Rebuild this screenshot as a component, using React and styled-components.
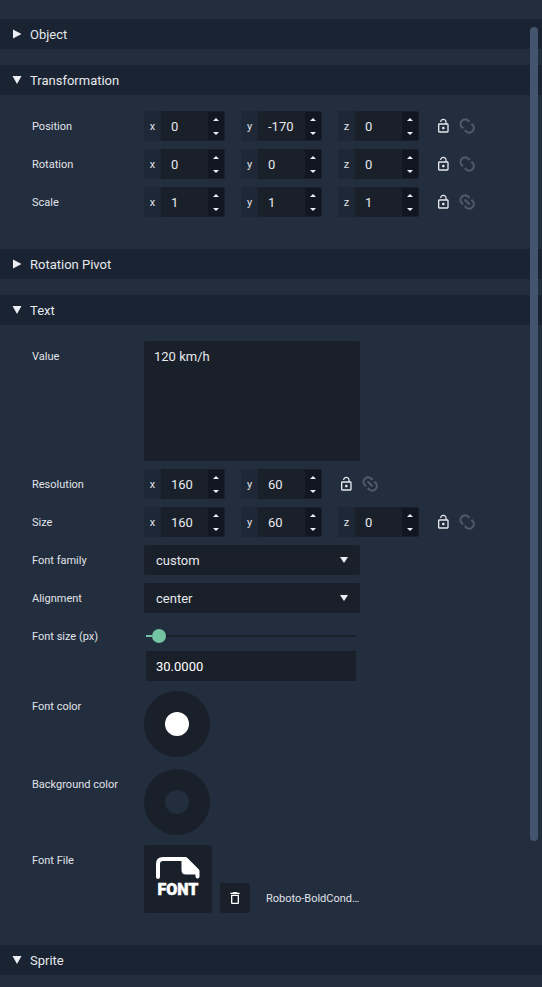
import React, { useState } from 'react';
import styled, { createGlobalStyle, ThemeProvider } from 'styled-components';

const theme = {
  page: '#222d3d',
  header: '#1a2331',
  field: '#1a2029',
  axis: '#1e2735',
  spinner: '#111622',
  text: '#e6e8ee',
  label: '#e0e3ea',
  muted: '#50586a',
  accent: '#74c4a3',
  thumb: '#44546e',
};

const GlobalStyle = createGlobalStyle`
  *, *::before, *::after { box-sizing: border-box; }
  html, body { margin: 0; background: ${theme.page}; }
  body, button, input, select, textarea {
    font-family: Roboto, "Liberation Sans", sans-serif;
    font-size: 13px;
    color: ${theme.text};
  }
  button { padding: 0; border: 0; background: none; cursor: pointer; }
`;

const Panel = styled.main`
  display: flex;
  flex-direction: column;
  gap: 16px;
  min-height: 100vh;
  padding-top: 19px;
`;

const ScrollThumb = styled.div`
  position: fixed;
  top: 27px;
  right: 4px;
  width: 8px;
  height: 82.5vh;
  border-radius: 4px;
  background: ${(p) => p.theme.thumb};
`;

const SectionHeader = styled.button`
  display: flex;
  align-items: center;
  gap: 8px;
  width: 100%;
  height: 30px;
  padding: 0 12px;
  background: ${(p) => p.theme.header};
  text-align: left;
`;

const SectionBody = styled.div`
  display: flex;
  flex-direction: column;
  gap: 8px;
  padding: 16px 32px;
`;

const Row = styled.div`
  display: grid;
  grid-template-columns: 112px minmax(0, 1fr);
  align-items: start;
  padding: ${(p) => (p.$roomy ? '2px 0' : '0')};
`;

const RowLabel = styled.label`
  height: 30px;
  font-size: 11px;
  line-height: 32px;
  color: ${(p) => p.theme.label};
`;

const AxisGroup = styled.div`
  display: flex;
  align-items: center;
  gap: 16px;
`;

const AxisField = styled.div`
  display: flex;
  width: 81px;
  height: 30px;
  border-radius: 2px;
  background: ${(p) => p.theme.field};
  overflow: hidden;
`;

const AxisName = styled.label`
  flex: 0 0 17px;
  background: ${(p) => p.theme.axis};
  font-size: 11px;
  line-height: 32px;
  text-align: center;
  color: ${(p) => p.theme.label};
`;

const AxisInput = styled.input`
  flex: 1;
  min-width: 0;
  padding: 0 0 0 10px;
  border: 0;
  outline: 0;
  background: transparent;
`;

const Spinner = styled.div`
  display: flex;
  flex-direction: column;
  flex: 0 0 16px;
  margin: 1px 1px 1px 0;
  background: ${(p) => p.theme.spinner};
`;

const StepButton = styled.button`
  flex: 1;
  display: flex;
  align-items: center;
  justify-content: center;
`;

const Toggles = styled.div`
  display: flex;
  gap: 6px;
`;

const IconToggle = styled.button`
  display: flex;
  align-items: center;
  justify-content: center;
  width: 18px;
  height: 30px;
  color: ${(p) => (p.$muted ? p.theme.muted : p.theme.text)};
`;

const TextArea = styled.textarea`
  display: block;
  width: 100%;
  max-width: 216px;
  height: 120px;
  padding: 8px 10px;
  border: 0;
  border-radius: 2px;
  outline: 0;
  resize: none;
  line-height: 15px;
  background: ${(p) => p.theme.field};
`;

const SelectBox = styled.div`
  position: relative;
  max-width: 216px;
  height: 30px;
`;

const Select = styled.select`
  appearance: none;
  width: 100%;
  height: 100%;
  padding: 0 32px 0 12px;
  border: 0;
  border-radius: 2px;
  outline: 0;
  background: ${(p) => p.theme.field};
`;

const SelectArrow = styled.span`
  position: absolute;
  inset: 0 12px 0 auto;
  display: flex;
  align-items: center;
  pointer-events: none;
`;

const SliderGroup = styled.div`
  display: flex;
  flex-direction: column;
  max-width: 214px;
  padding: 0 2px;
`;

const Slider = styled.input`
  appearance: none;
  width: 100%;
  height: 30px;
  margin: 0;
  background: transparent;

  &::-webkit-slider-runnable-track {
    height: 2px;
    background: linear-gradient(
      to right,
      ${(p) => p.theme.accent} var(--filled),
      ${(p) => p.theme.field} var(--filled)
    );
  }
  &::-webkit-slider-thumb {
    appearance: none;
    width: 14px;
    height: 14px;
    margin-top: -6px;
    border-radius: 50%;
    background: ${(p) => p.theme.accent};
  }
`;

const SliderValue = styled.input`
  width: 100%;
  height: 30px;
  padding: 0 10px;
  border: 0;
  outline: 0;
  background: ${(p) => p.theme.field};
  color: #fff;
`;

const ColorButton = styled.button`
  display: flex;
  align-items: center;
  justify-content: center;
  width: 66px;
  height: 66px;
  border-radius: 50%;
  background: ${(p) => p.theme.field};
`;

const Swatch = styled.span`
  width: 24px;
  height: 24px;
  border-radius: 50%;
  background: ${(p) => p.$color};
`;

const FileGroup = styled.div`
  display: flex;
  align-items: flex-end;
  gap: 8px;
`;

const FileButton = styled.button`
  display: flex;
  align-items: center;
  justify-content: center;
  width: ${(p) => (p.$large ? '68px' : '30px')};
  height: ${(p) => (p.$large ? '68px' : '30px')};
  border-radius: 2px;
  background: ${(p) => p.theme.field};
  color: #fff;
`;

const FileName = styled.span`
  margin-left: 8px;
  height: 30px;
  white-space: nowrap;
  font-size: 11px;
  line-height: 32px;
  color: ${(p) => p.theme.label};
`;

const Triangle = ({ open }) => (
  <svg width="10" height="10" viewBox="0 0 10 10" fill="#eceef3" aria-hidden="true">
    <path d={open ? 'M.5 1h9L5 9z' : 'M1 .5v9L9.5 5z'} />
  </svg>
);

const CaretDown = () => (
  <svg width="8" height="6" viewBox="0 0 8 6" fill="#eceef3" aria-hidden="true">
    <path d="M0 0h8L4 6z" />
  </svg>
);

const StepArrow = ({ up }) => (
  <svg width="6" height="3" viewBox="0 0 6 3" fill="#eceef3" aria-hidden="true">
    <path d={up ? 'M0 3h6L3 0z' : 'M0 0h6L3 3z'} />
  </svg>
);

const LockOpenIcon = () => (
  <svg width="16" height="16" viewBox="1 0 24 24" fill="currentColor" aria-hidden="true">
    <path d="M12 17c1.1 0 2-.9 2-2s-.9-2-2-2-2 .9-2 2 .9 2 2 2zm6-9h-1V6c0-2.76-2.24-5-5-5S7 3.24 7 6h1.9c0-1.71 1.39-3.1 3.1-3.1s3.1 1.39 3.1 3.1v2H6c-1.1 0-2 .9-2 2v10c0 1.1.9 2 2 2h12c1.1 0 2-.9 2-2V10c0-1.1-.9-2-2-2zm0 12H6V10h12v10z" />
  </svg>
);

const LinkIcon = ({ linked }) => (
  <svg
    width="18"
    height="18"
    viewBox="2 1 22 22"
    fill="none"
    stroke="currentColor"
    strokeWidth="2.6"
    aria-hidden="true"
  >
    <g transform="rotate(45 12 12)">
      <path d="M10.500 6.400H8.500a5.600 5.600 0 0 0 0 11.200h2M13.500 6.400h2a5.600 5.600 0 0 1 0 11.200h-2" />
      {linked && <path d="M7.500 12h9" />}
    </g>
  </svg>
);

const TrashIcon = () => (
  <svg width="16" height="16" viewBox="0 0 24 24" fill="currentColor" aria-hidden="true">
    <path d="M6 19c0 1.100.9 2 2 2h8c1.100 0 2-.9 2-2V7H6v12zM8 9h8v10H8V9zm7.500-5l-1-1h-5l-1 1H5v2h14V4z" />
  </svg>
);

const FontFileIcon = () => (
  <svg width="44" height="44" viewBox="0 0 44 44" aria-hidden="true">
    <path
      d="M2 20V7q0-5 5-5h22.500L41.500 14v5.500"
      fill="none"
      stroke="#fff"
      strokeWidth="4"
      strokeLinecap="round"
      strokeLinejoin="round"
    />
    <path d="M25.500 2v11q0 4.500 4.500 4.500h11.500V14L30 2z" fill="#fff" />
    <text
      x="22"
      y="38"
      textAnchor="middle"
      fontFamily="Roboto, sans-serif"
      fontSize="16"
      fontWeight="900"
      fill="#fff"
      stroke="#fff"
      strokeWidth="0.5"
      strokeLinejoin="round"
    >
      FONT
    </text>
  </svg>
);

function Section({ title, defaultOpen, children }) {
  const [open, setOpen] = useState(Boolean(defaultOpen));
  return (
    <section>
      <SectionHeader type="button" aria-expanded={open} onClick={() => setOpen(!open)}>
        <Triangle open={open} />
        {title}
      </SectionHeader>
      {open && children && <SectionBody>{children}</SectionBody>}
    </section>
  );
}

function VectorRow({ label, values, linked }) {
  const [axes, setAxes] = useState(values);
  const id = label.toLowerCase();
  const change = (axis, value) => setAxes({ ...axes, [axis]: value });
  return (
    <Row>
      <RowLabel htmlFor={`${id}-x`}>{label}</RowLabel>
      <AxisGroup>
        {Object.keys(axes).map((axis) => (
          <AxisField key={axis}>
            <AxisName htmlFor={`${id}-${axis}`}>{axis}</AxisName>
            <AxisInput
              id={`${id}-${axis}`}
              inputMode="decimal"
              value={axes[axis]}
              onChange={(e) => change(axis, e.target.value)}
            />
            <Spinner>
              <StepButton type="button" aria-label={`Increase ${axis}`} onClick={() => change(axis, Number(axes[axis]) + 1)}>
                <StepArrow up />
              </StepButton>
              <StepButton type="button" aria-label={`Decrease ${axis}`} onClick={() => change(axis, Number(axes[axis]) - 1)}>
                <StepArrow />
              </StepButton>
            </Spinner>
          </AxisField>
        ))}
        <Toggles>
          <IconToggle type="button" aria-label={`Lock ${label}`}>
            <LockOpenIcon />
          </IconToggle>
          <IconToggle type="button" $muted aria-label={`Link ${label} axes`}>
            <LinkIcon linked={linked} />
          </IconToggle>
        </Toggles>
      </AxisGroup>
    </Row>
  );
}

function SelectRow({ id, label, options }) {
  return (
    <Row>
      <RowLabel htmlFor={id}>{label}</RowLabel>
      <SelectBox>
        <Select id={id} defaultValue={options[0]}>
          {options.map((option) => (
            <option key={option}>{option}</option>
          ))}
        </Select>
        <SelectArrow>
          <CaretDown />
        </SelectArrow>
      </SelectBox>
    </Row>
  );
}

function FontSizeRow() {
  const [size, setSize] = useState(30);
  return (
    <Row>
      <RowLabel htmlFor="font-size">Font size (px)</RowLabel>
      <SliderGroup>
        <Slider
          id="font-size"
          type="range"
          min="1"
          max="1000"
          value={size}
          style={{ '--filled': `${(size / 1000) * 100}%` }}
          onChange={(e) => setSize(Number(e.target.value))}
        />
        <SliderValue aria-label="Font size value" readOnly value={size.toFixed(4)} />
      </SliderGroup>
    </Row>
  );
}

function ColorRow({ id, label, color }) {
  return (
    <Row $roomy>
      <RowLabel htmlFor={id}>{label}</RowLabel>
      <ColorButton id={id} type="button">
        <Swatch $color={color} />
      </ColorButton>
    </Row>
  );
}

export default function App() {
  return (
    <ThemeProvider theme={theme}>
      <GlobalStyle />
      <Panel>
        <Section title="Object" />
        <Section title="Transformation" defaultOpen>
          <VectorRow label="Position" values={{ x: 0, y: -170, z: 0 }} />
          <VectorRow label="Rotation" values={{ x: 0, y: 0, z: 0 }} />
          <VectorRow label="Scale" values={{ x: 1, y: 1, z: 1 }} linked />
        </Section>
        <Section title="Rotation Pivot" />
        <Section title="Text" defaultOpen>
          <Row>
            <RowLabel htmlFor="value">Value</RowLabel>
            <TextArea id="value" defaultValue="120 km/h" />
          </Row>
          <VectorRow label="Resolution" values={{ x: 160, y: 60 }} linked />
          <VectorRow label="Size" values={{ x: 160, y: 60, z: 0 }} />
          <SelectRow id="font-family" label="Font family" options={['custom']} />
          <SelectRow id="alignment" label="Alignment" options={['center', 'left', 'right']} />
          <FontSizeRow />
          <ColorRow id="font-color" label="Font color" color="#fff" />
          <ColorRow id="background-color" label="Background color" color={theme.page} />
          <Row>
            <RowLabel htmlFor="font-file">Font File</RowLabel>
            <FileGroup>
              <FileButton id="font-file" type="button" $large>
                <FontFileIcon />
              </FileButton>
              <FileButton type="button" aria-label="Remove font file">
                <TrashIcon />
              </FileButton>
              <FileName>Roboto-BoldCond…</FileName>
            </FileGroup>
          </Row>
        </Section>
        <Section title="Sprite" defaultOpen />
      </Panel>
      <ScrollThumb />
    </ThemeProvider>
  );
}
